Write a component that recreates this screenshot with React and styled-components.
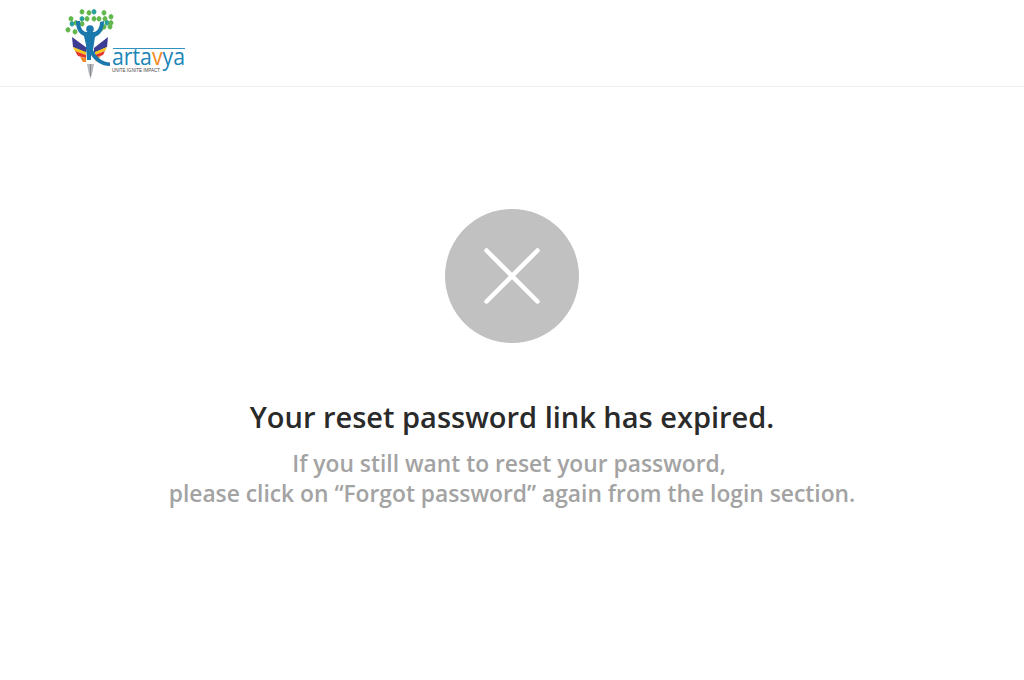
import React from 'react'
import styled, { createGlobalStyle } from 'styled-components'

const GlobalStyle = createGlobalStyle`
  html, body {
    margin: 0;
    padding: 0;
    background: #fff;
    font-family: "Open Sans", "Liberation Sans", sans-serif;
  }
`

const Header = styled.header`
  display: flex;
  align-items: flex-start;
  height: 86px;
  padding-left: 55px;
  border-bottom: 1px solid #f0f0f0;
`

const Main = styled.main`
  display: flex;
  flex-direction: column;
  align-items: center;
  padding-top: 122px;
  text-align: center;
`

const Circle = styled.div`
  display: flex;
  align-items: center;
  justify-content: center;
  width: 134px;
  height: 134px;
  border-radius: 50%;
  background: #c1c1c1;
`

const Title = styled.h1`
  margin: 54px 0 0;
  font-size: 29px;
  line-height: 40px;
  font-weight: 600;
  color: #2a2a2a;
`

const Message = styled.p`
  margin: 12px 0 0;
  font-size: 22.8px;
  line-height: 29.5px;
  font-weight: 600;
  color: #a3a3a3;
`

const leaves = [
  [27, 12], [34, 13], [39, 12], [49, 13], [56, 17], [16, 19], [21, 23], [27, 19],
  [32, 19], [39, 19], [44, 19], [50, 19], [52, 23], [56, 23], [55, 27], [13, 30],
  [20, 32], [17, 24], [49, 27], [46, 29], [27, 24],
]

const Logo = () => (
  <svg width="140" height="86" viewBox="0 0 140 86" aria-label="Kartavya logo">
    {leaves.map(([x, y], i) => (
      <path
        key={i}
        d={`M${x} ${y - 3} C${x + 3.5} ${y - 2} ${x + 3} ${y + 2} ${x} ${y + 2.5} C${x - 3} ${y + 2} ${x - 3.5} ${y - 2} ${x} ${y - 3} Z`}
        fill={i % 5 === 2 ? '#2b9f9a' : '#63b74d'}
      />
    ))}
    <path d="M17 37 L32 48 L31 53 L18 47 Z" fill="#3b3c92" />
    <path d="M53 37 L39 48 L39 53 L52 47 Z" fill="#3b3c92" />
    <path d="M18 47 L31 52 L31 55 L20 51 Z" fill="#f6c81e" />
    <path d="M52 47 L40 52 L40 55 L50 51 Z" fill="#f6c81e" />
    <path d="M20 51 L31 55 L31 58 L23 56 Z" fill="#e2352c" />
    <path d="M50 51 L40 55 L40 58 L48 55 Z" fill="#e2352c" />
    <path d="M25 57 L31 58 L31 62 L28 62 Z" fill="#f08a24" />
    <path d="M46 56 L40 58 L41 62 Z" fill="#f08a24" />
    <path d="M32 64 L39 64 L37.5 72 L35.5 79 L33.5 72 Z" fill="#b4b8bd" />
    <path d="M35.5 64 V76" stroke="#6f7479" strokeWidth="0.7" />
    <circle cx="35" cy="29" r="3.8" fill="#1b78ad" />
    <path
      d="M21 21 C21 29 24 34 29 36 L31 45 L32 60 L36 60 L36 55 C40 61 46 66 55 66 L55 62.5 C48 62.5 41 57 38 50 L40 37 C45 35 49 30 49 21 L45 22 C45 27 43 31 39 32 L31 32 C27 31 25 27 25 21 Z"
      fill="#1b78ad"
    />
    <path d="M58 48.5 H130" stroke="#1b86b8" strokeWidth="0.9" />
    <text x="57" y="65" fontFamily="Open Sans, sans-serif" fontSize="24" fill="#1b86b8" textLength="73" lengthAdjust="spacingAndGlyphs">
      arta<tspan fill="#f08a24">v</tspan>ya
    </text>
    <text x="57" y="71.5" fontFamily="Liberation Sans, sans-serif" fontSize="5" fill="#4a4a4a" textLength="48" lengthAdjust="spacingAndGlyphs">
      UNITE IGNITE IMPACT
    </text>
  </svg>
)

const CrossIcon = () => (
  <svg width="56" height="56" viewBox="0 0 56 56" fill="none" stroke="#fff" strokeWidth="4.5" strokeLinecap="round">
    <path d="M2.5 2.5 L53.5 53.5 M53.5 2.5 L2.5 53.5" />
  </svg>
)

const App = () => (
  <>
    <GlobalStyle />
    <Header>
      <Logo />
    </Header>
    <Main>
      <Circle>
        <CrossIcon />
      </Circle>
      <Title>Your reset password link has expired.</Title>
      <Message>
        If you still want to reset your password,&nbsp;
        <br />
        please click on “Forgot password” again from the login section.
      </Message>
    </Main>
  </>
)

export default App
